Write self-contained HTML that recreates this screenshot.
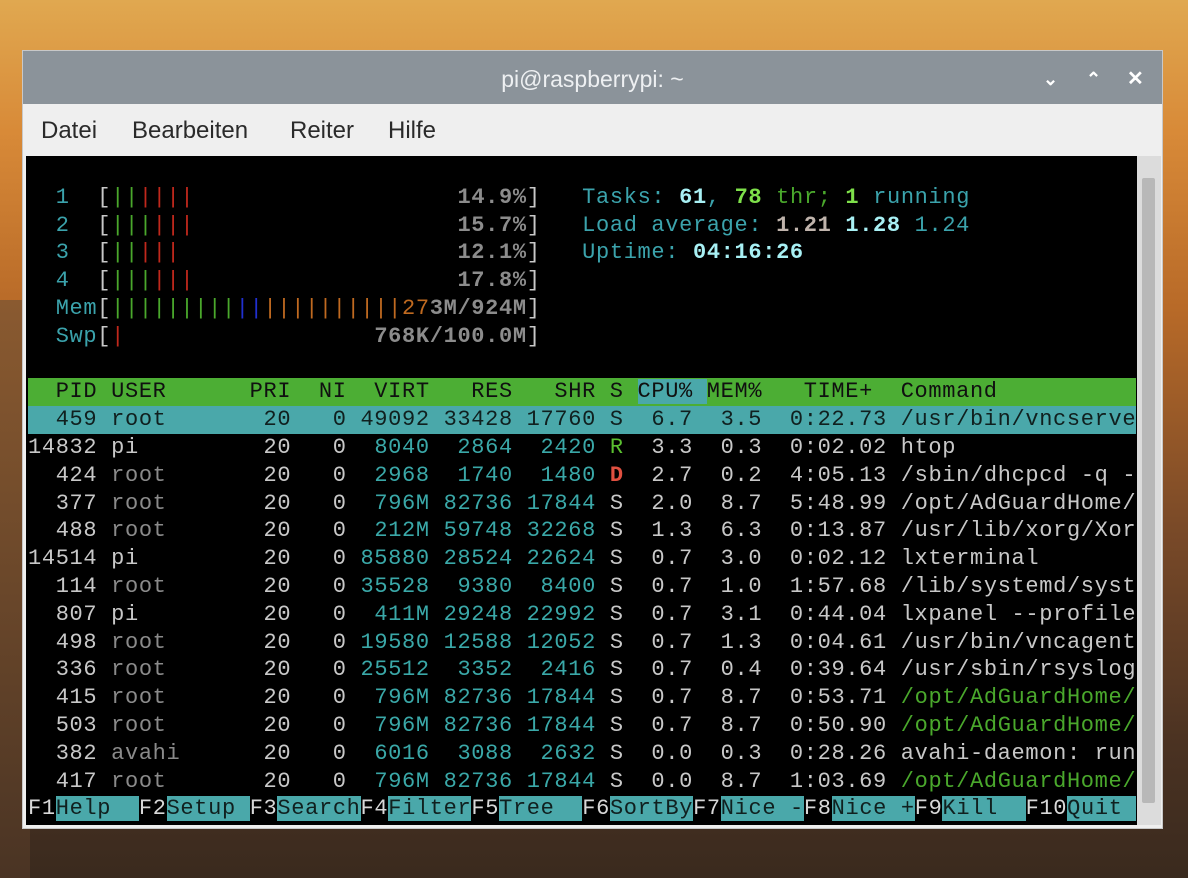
<!DOCTYPE html>
<html><head><meta charset="utf-8"><style>
*{margin:0;padding:0;box-sizing:border-box}
html,body{width:1188px;height:878px;overflow:hidden}
body{position:relative;background:linear-gradient(180deg,#e0a850 0%,#d88a38 15%,#b86a28 35%,#7a4a28 60%,#4a3222 85%,#3a2a1e 100%);font-family:"Liberation Sans",sans-serif}
.bgl{position:absolute;left:0;top:300px;width:30px;height:578px;background:linear-gradient(180deg,#8a5a30,#4a3424)}
.win{position:absolute;left:22px;top:50px;width:1141px;height:779px;background:#efefef;border:1px solid #c8c8c8}
.title{position:absolute;left:0;top:0;width:100%;height:53px;background:#8b939a;color:#eef0f2;font-size:23px;text-align:center;line-height:56px}
.ctl{position:absolute;top:0;height:53px;line-height:56px;color:#fff;font-weight:bold;font-size:18px}
.menu{position:absolute;left:0;top:53px;height:52px;width:100%;font-size:24px;color:#2a2a2a;line-height:54px}
.menu span{position:absolute}
.term{position:absolute;left:26px;top:156px;width:1111px;height:669px;background:#000}
.sb{position:absolute;left:1137px;top:156px;width:24px;height:669px;background:#dcdcdc}
.thumb{position:absolute;left:5px;top:22px;width:13px;height:625px;background:#b8b8b8;border-radius:2px}
.lines{position:absolute;left:28px;top:156px;font-family:"Liberation Mono",monospace;font-size:22px;letter-spacing:0.65px;line-height:27.8px;color:#c8c8c8}
.lines div{height:27.8px;width:1108px;white-space:pre;overflow:hidden}
.c{color:#3ba3ac}.C{color:#a8f0f4;font-weight:bold}.G{color:#7ee04a;font-weight:bold}.g{color:#4aa82c}
.r{color:#c0281c}.b{color:#2030d0}.o{color:#c06a20}.w{color:#c8c8c8}.p{color:#8c8c8c;font-weight:bold}
.d{color:#8a8a8a}.t{color:#3aa8a8}.L{color:#c0b4ac;font-weight:bold}
.hd{background:#4cae34;color:#101010}.sel{background:#4aa8aa;color:#10201f}
.cy{background:#4aa8aa}
.fk{color:#d8d8d8}.fl{background:#4aa8aa;color:#10201f}
.red{color:#e05040;font-weight:bold}.gR{color:#5ac030}
</style></head><body>
<div class="bgl"></div>
<div class="win">
<div class="title">pi@raspberrypi: ~</div>
<div class="ctl" style="left:1020px">&#8964;</div>
<div class="ctl" style="left:1063px">&#8963;</div>
<div class="ctl" style="left:1104px;font-size:20px">&#10005;</div>
<div class="menu"><span style="left:18px">Datei</span><span style="left:109px">Bearbeiten</span><span style="left:267px">Reiter</span><span style="left:365px">Hilfe</span></div>
</div>
<div class="term"></div>
<div class="sb"><div class="thumb"></div></div>
<div class="lines"><div> </div><div><span class="c">  1  </span><span class="w">[</span><span class="g">||</span><span class="r">||||</span>                   <span class="p">14.9%</span><span class="w">]</span>   <span class="c">Tasks: </span><span class="C">61</span><span class="c">, </span><span class="G">78</span><span class="g"> thr; </span><span class="G">1</span><span class="c"> running</span></div><div><span class="c">  2  </span><span class="w">[</span><span class="g">|||</span><span class="r">|||</span>                   <span class="p">15.7%</span><span class="w">]</span>   <span class="c">Load average: </span><span class="L">1.21 </span><span class="C">1.28 </span><span class="c">1.24</span></div><div><span class="c">  3  </span><span class="w">[</span><span class="g">||</span><span class="r">|||</span>                    <span class="p">12.1%</span><span class="w">]</span>   <span class="c">Uptime: </span><span class="C">04:16:26</span></div><div><span class="c">  4  </span><span class="w">[</span><span class="g">|||</span><span class="r">|||</span>                   <span class="p">17.8%</span><span class="w">]</span></div><div><span class="c">  Mem</span><span class="w">[</span><span class="g">|||||||||</span><span class="b">||</span><span class="o">||||||||||27</span><span class="p">3M/924M</span><span class="w">]</span></div><div><span class="c">  Swp</span><span class="w">[</span><span class="r">|</span>                  <span class="p">768K/100.0M</span><span class="w">]</span></div><div> </div><div class="hd">  PID USER      PRI  NI  VIRT   RES   SHR S <span class="cy">CPU% </span>MEM%   TIME+  Command</div><div class="sel">  459 root       20   0 49092 33428 17760 S  6.7  3.5  0:22.73 /usr/bin/vncserve</div><div>14832 pi         20   0  <span class="t">8040  2864  2420</span> <span class="gR">R</span>  3.3  0.3  0:02.02 htop</div><div>  424 <span class="d">root</span>       20   0  <span class="t">2968  1740  1480</span> <span class="red">D</span>  2.7  0.2  4:05.13 /sbin/dhcpcd -q -</div><div>  377 <span class="d">root</span>       20   0  <span class="t">796M 82736 17844</span> S  2.0  8.7  5:48.99 /opt/AdGuardHome/</div><div>  488 <span class="d">root</span>       20   0  <span class="t">212M 59748 32268</span> S  1.3  6.3  0:13.87 /usr/lib/xorg/Xor</div><div>14514 pi         20   0 <span class="t">85880 28524 22624</span> S  0.7  3.0  0:02.12 lxterminal</div><div>  114 <span class="d">root</span>       20   0 <span class="t">35528  9380  8400</span> S  0.7  1.0  1:57.68 /lib/systemd/syst</div><div>  807 pi         20   0  <span class="t">411M 29248 22992</span> S  0.7  3.1  0:44.04 lxpanel --profile</div><div>  498 <span class="d">root</span>       20   0 <span class="t">19580 12588 12052</span> S  0.7  1.3  0:04.61 /usr/bin/vncagent</div><div>  336 <span class="d">root</span>       20   0 <span class="t">25512  3352  2416</span> S  0.7  0.4  0:39.64 /usr/sbin/rsyslog</div><div>  415 <span class="d">root</span>       20   0  <span class="t">796M 82736 17844</span> S  0.7  8.7  0:53.71 <span class="g">/opt/AdGuardHome/</span></div><div>  503 <span class="d">root</span>       20   0  <span class="t">796M 82736 17844</span> S  0.7  8.7  0:50.90 <span class="g">/opt/AdGuardHome/</span></div><div>  382 <span class="d">avahi</span>      20   0  <span class="t">6016  3088  2632</span> S  0.0  0.3  0:28.26 avahi-daemon: run</div><div>  417 <span class="d">root</span>       20   0  <span class="t">796M 82736 17844</span> S  0.0  8.7  1:03.69 <span class="g">/opt/AdGuardHome/</span></div><div><span class="fk">F1</span><span class="fl">Help  </span><span class="fk">F2</span><span class="fl">Setup </span><span class="fk">F3</span><span class="fl">Search</span><span class="fk">F4</span><span class="fl">Filter</span><span class="fk">F5</span><span class="fl">Tree  </span><span class="fk">F6</span><span class="fl">SortBy</span><span class="fk">F7</span><span class="fl">Nice -</span><span class="fk">F8</span><span class="fl">Nice +</span><span class="fk">F9</span><span class="fl">Kill  </span><span class="fk">F10</span><span class="fl">Quit  </span></div></div>
</body></html>
